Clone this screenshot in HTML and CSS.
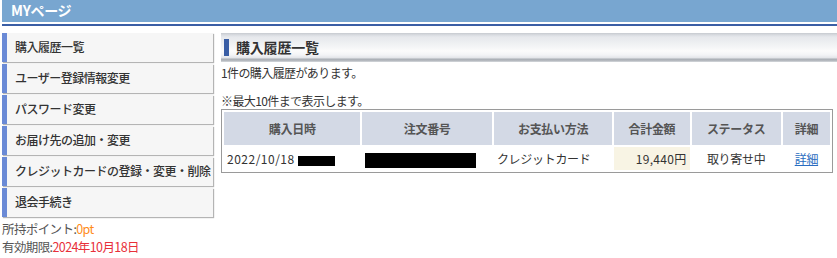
FILE: index.html
```html
<!DOCTYPE html>
<html lang="ja">
<head>
    <meta charset="UTF-8">
    <meta name="viewport" content="width=device-width, initial-scale=1.0">
    <title>MYページ</title>
    <link rel="stylesheet" href="styles.css">
</head>
<body>
    <div class="page">
        <div class="page-header">
            <h1>MYページ</h1>
        </div>
        <div class="page-body">
            <div class="side">
                <ul class="side-menu">
                    <li><a href="#">購入履歴一覧</a></li>
                    <li><a href="#">ユーザー登録情報変更</a></li>
                    <li><a href="#">パスワード変更</a></li>
                    <li><a href="#">お届け先の追加・変更</a></li>
                    <li><a href="#">クレジットカードの登録・変更・削除</a></li>
                    <li><a href="#">退会手続き</a></li>
                </ul>
                <div class="points">
                    <p>所持ポイント:<span class="pt">0pt</span></p>
                    <p>有効期限:<span class="limit">2024年10月18日</span></p>
                </div>
            </div>
            <div class="main">
                <h2 class="section-title">購入履歴一覧</h2>
                <p class="info">1件の購入履歴があります。</p>
                <p class="info note">※最大10件まで表示します。</p>
                <table class="history">
                    <thead>
                        <tr>
                            <th class="c-date">購入日時</th>
                            <th class="c-no">注文番号</th>
                            <th class="c-pay">お支払い方法</th>
                            <th class="c-total">合計金額</th>
                            <th class="c-status">ステータス</th>
                            <th class="c-detail">詳細</th>
                        </tr>
                    </thead>
                    <tbody>
                        <tr>
                            <td class="date">2022/10/18 <span class="mask mask-time"></span></td>
                            <td><span class="mask mask-no"></span></td>
                            <td>クレジットカード</td>
                            <td class="price">19,440円</td>
                            <td class="center">取り寄せ中</td>
                            <td class="center"><a href="#">詳細</a></td>
                        </tr>
                    </tbody>
                </table>
            </div>
        </div>
    </div>
</body>
</html>
```

FILE: styles.css
```css
body {
    margin: 0;
    padding: 0;
    background: #fff;
    color: #333;
    font-family: "Noto Sans CJK JP", "Noto Sans", sans-serif;
    font-size: 12px;
    letter-spacing: -0.6px;
}
.page {
    padding-left: 2px;
}
.page-header {
    background: #78a6d0;
    height: 22px;
    border-bottom: 2px solid #fff;
    box-shadow: 0 2px 0 #3a5ea5;
}
.page-header h1 {
    margin: 0;
    padding-left: 9px;
    font-size: 14px;
    line-height: 21px;
    color: #fff;
    letter-spacing: -0.3px;
}
.page-body {
    display: flex;
    gap: 8px;
    margin-top: 9px;
}
.side {
    width: 211px;
    flex-shrink: 0;
}
.side-menu {
    list-style: none;
    margin: 0;
    padding: 0;
}
.side-menu li {
    margin-bottom: 2px;
}
.side-menu a {
    display: block;
    height: 29px;
    line-height: 28px;
    padding-left: 8px;
    background: #f6f6f6;
    border-left: 5px solid #6a8ad6;
    box-shadow: 1px 1px 1px #b4b4b4;
    color: #333;
    text-decoration: none;
    white-space: nowrap;
    overflow: hidden;
    font-size: 12px;
    font-weight: 500;
    letter-spacing: -0.5px;
}
.points {
    margin-top: 3px;
    color: #555;
    font-size: 12.5px;
}
.points p {
    margin: 0;
    line-height: 18px;
}
.pt {
    color: #ff8c1a;
}
.limit {
    color: #e8303a;
}
.main {
    flex: 1;
}
.section-title {
    margin: 0;
    height: 29px;
    box-sizing: border-box;
    padding: 6px 0 0 3px;
    font-size: 14px;
    line-height: 17px;
    color: #333;
    letter-spacing: -0.2px;
    background: linear-gradient(to bottom,
        #c6cad0 0px, #d9dce1 2px, #e6e8ec 4px, #eef0f2 10px,
        #fbfbfb 18px, #f3f4f6 22px, #e2e4e8 25px, #a9aeb4 26px, #b8bcc2 28px, #dde0e3 29px);
}
.section-title::before {
    content: "";
    display: inline-block;
    width: 5px;
    height: 17px;
    background: #3a5ea5;
    vertical-align: top;
    margin-right: 7px;
}
.info {
    margin: 4px 0 0;
    line-height: 14px;
}
.note {
    margin-top: 14px;
}
.history {
    margin-top: 1px;
    width: 612px;
    border: 1px solid #9a9a9a;
    border-spacing: 2px;
    letter-spacing: -0.3px;
}
.history th {
    background: #d3d9e5;
    color: #555;
    font-weight: bold;
    height: 33px;
    padding: 0;
    text-align: center;
}
.history td {
    height: 23px;
    padding: 0 3px;
    color: #333;
}
.c-date { width: 136px; }
.c-no { width: 129px; }
.c-pay { width: 118px; }
.c-total { width: 75px; }
.c-status { width: 89px; }
.c-detail { width: 47px; }
.history td.date {
    letter-spacing: 0.5px;
}
.history td.center {
    text-align: center;
}
.history td.price {
    text-align: right;
    background: #f8f4e4;
    letter-spacing: 0.3px;
}
.history a {
    color: #2a6cc0;
}
.mask {
    display: inline-block;
    background: #000;
    vertical-align: middle;
}
.mask-time {
    width: 37px;
    height: 10px;
}
.mask-no {
    width: 111px;
    height: 15px;
}
```
